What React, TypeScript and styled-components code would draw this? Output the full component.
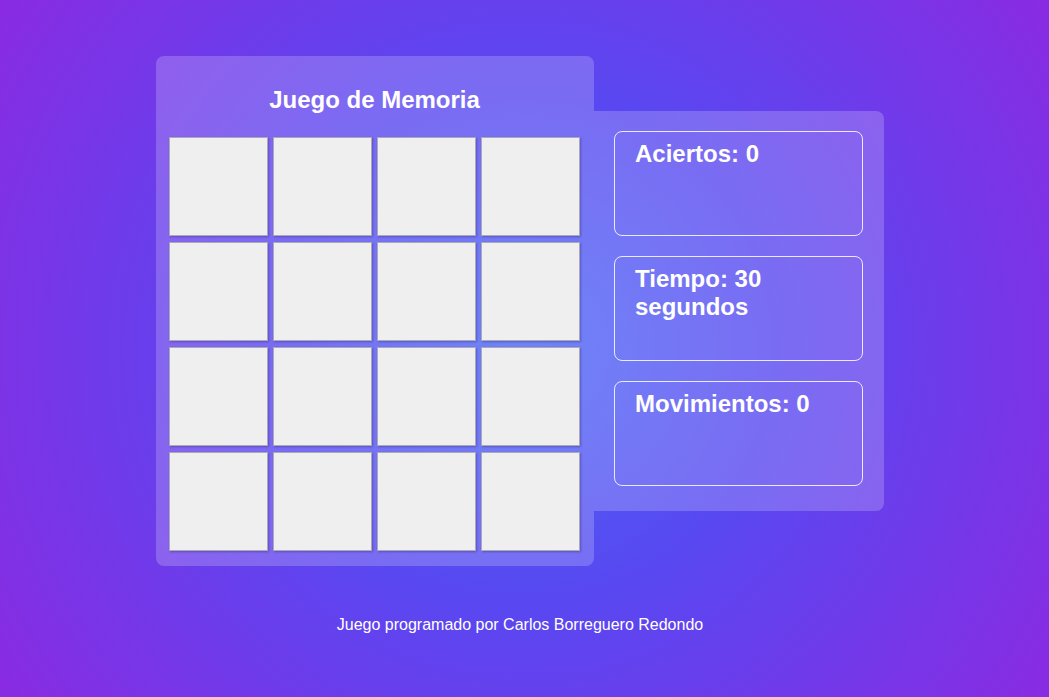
import React from "react";
import styled, { createGlobalStyle } from "styled-components";

const GlobalStyle = createGlobalStyle`
  html, body {
    margin: 0;
    padding: 0;
    min-height: 100%;
  }
  body {
    font-family: "Liberation Sans", Arial, sans-serif;
    color: #ffffff;
    min-height: 697px;
    background: radial-gradient(circle at 50% 50%, #4a66f6 0%, #5848f1 40%, #8a2be2 100%);
    background-attachment: fixed;
  }
`;

const Page = styled.div`
  display: flex;
  flex-direction: column;
  align-items: center;
  padding: 56px 9px 0 0;
`;

const Game = styled.div`
  display: flex;
  align-items: center;
`;

const BoardPanel = styled.section`
  width: 438px;
  box-sizing: border-box;
  padding: 30px 14px 15px 13px;
  border-radius: 8px;
  background: rgba(255, 255, 255, 0.2);
  display: flex;
  flex-direction: column;
  align-items: stretch;
`;

const Title = styled.h1`
  margin: 0 0 23px;
  font-size: 24px;
  font-weight: 700;
  text-align: center;
  line-height: normal;
`;

const Grid = styled.div`
  display: grid;
  grid-template-columns: repeat(4, 99px);
  grid-auto-rows: 99px;
  column-gap: 5px;
  row-gap: 6px;
`;

const Card = styled.div`
  box-sizing: border-box;
  background: #efefef;
  border: 1px solid #a9a9b8;
  box-shadow: 1px 1px 2px rgba(40, 30, 90, 0.35);
`;

const StatsPanel = styled.aside`
  width: 290px;
  box-sizing: border-box;
  padding: 20px 21px 25px 20px;
  border-radius: 0 8px 8px 0;
  background: rgba(255, 255, 255, 0.2);
  display: flex;
  flex-direction: column;
  gap: 20px;
`;

const StatBox = styled.div`
  box-sizing: border-box;
  height: 105px;
  padding: 8px 20px;
  border: 1px solid rgba(255, 255, 255, 0.85);
  border-radius: 8px;
`;

const StatText = styled.h2`
  margin: 0;
  font-size: 24px;
  font-weight: 700;
  line-height: normal;
`;

const Footer = styled.footer`
  margin-top: 50px;
  font-size: 16px;
  text-align: center;
`;

const stats = ["Aciertos: 0", "Tiempo: 30 segundos", "Movimientos: 0"];

export default function App() {
  return (
    <>
      <GlobalStyle />
      <Page>
        <Game>
          <BoardPanel>
            <Title>Juego de Memoria</Title>
            <Grid>
              {Array.from({ length: 16 }).map((_, i) => (
                <Card key={i} />
              ))}
            </Grid>
          </BoardPanel>
          <StatsPanel>
            {stats.map((s) => (
              <StatBox key={s}>
                <StatText>{s}</StatText>
              </StatBox>
            ))}
          </StatsPanel>
        </Game>
        <Footer>Juego programado por Carlos Borreguero Redondo</Footer>
      </Page>
    </>
  );
}
